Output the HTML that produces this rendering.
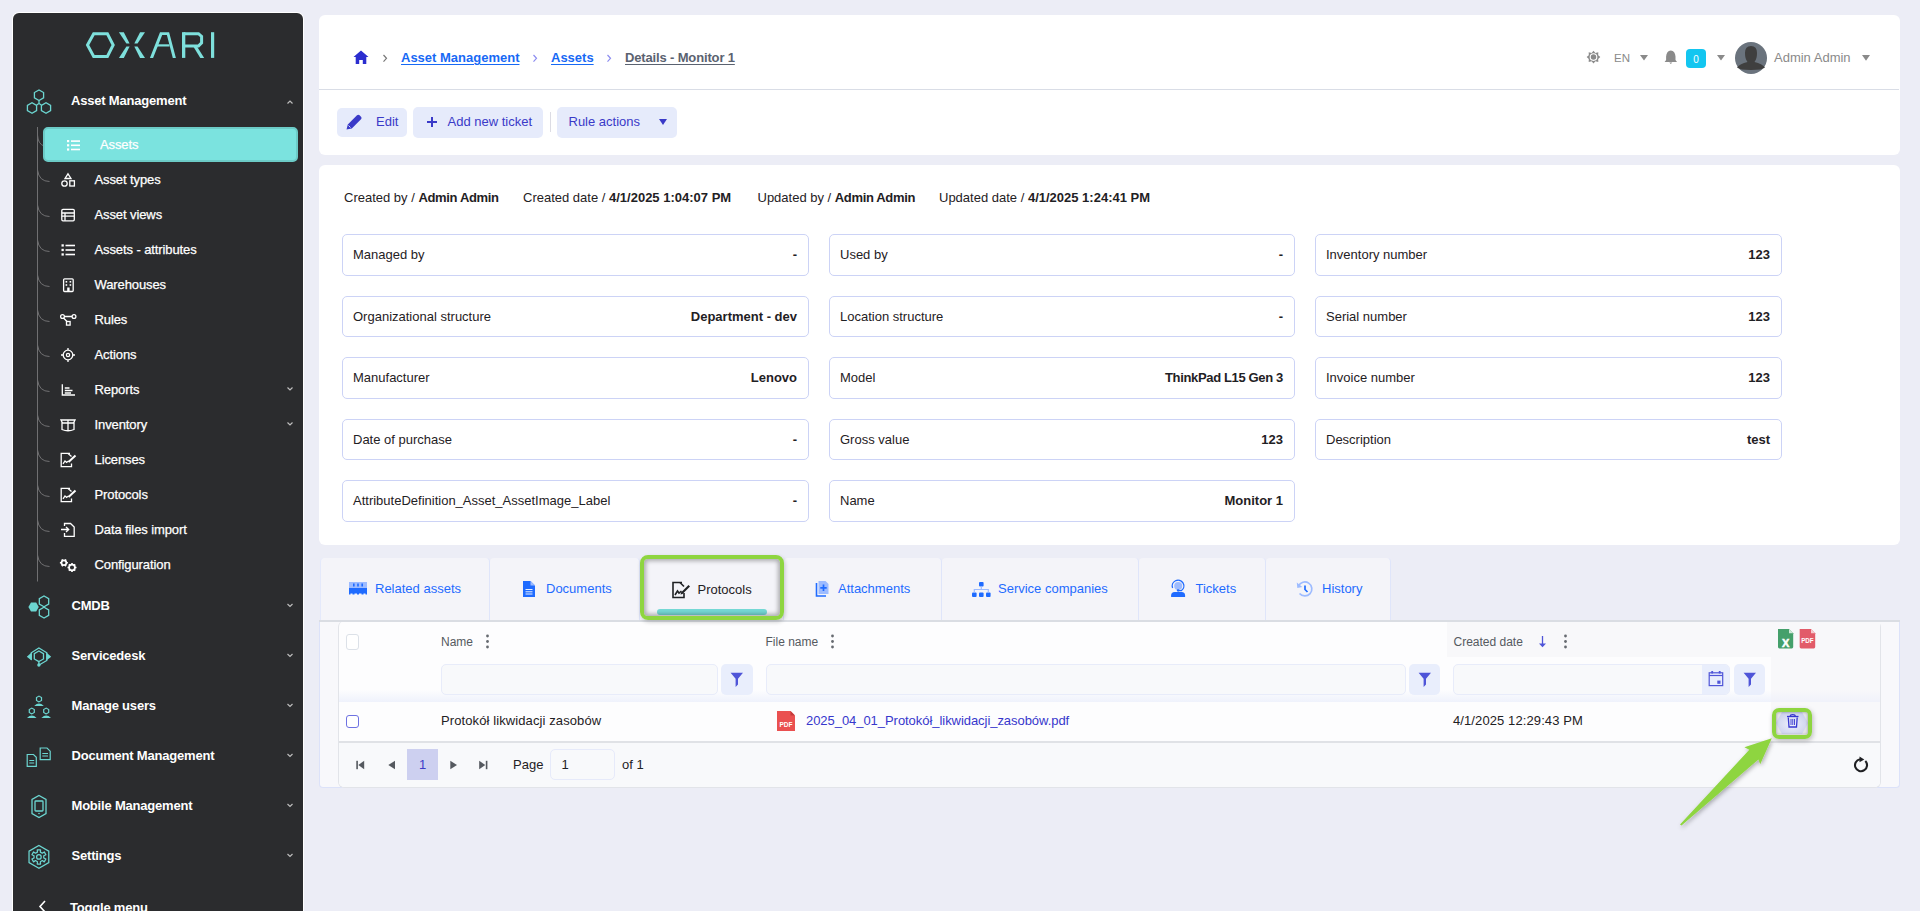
<!DOCTYPE html>
<html><head><meta charset="utf-8">
<style>
*{box-sizing:border-box;margin:0;padding:0}
html,body{width:1920px;height:911px;overflow:hidden}
body{background:#ECEDF6;font-family:"Liberation Sans",sans-serif;font-size:13px;color:#1F2124;position:relative}
.abs{position:absolute}
svg{display:block;overflow:visible}
/* sidebar */
#sb{position:absolute;left:13px;top:13px;width:290px;height:920px;background:#2B2C2E;border-radius:6px;box-shadow:0 0 0 1px #fff}
.sbt{position:absolute;color:#fff;font-size:13px;white-space:nowrap;line-height:16px;margin-top:1px}
.sbm{font-weight:bold;letter-spacing:-0.2px}
.sbs{letter-spacing:-0.1px;-webkit-text-stroke:0.25px #fff}
.chev{position:absolute;left:286px;width:6px;height:6px}
/* cards */
.card{position:absolute;background:#fff;border-radius:6px}
.lnk{color:#1769F5;font-weight:bold;text-decoration:underline;text-underline-offset:2px;text-decoration-thickness:1px}
.btn{position:absolute;background:#E6EBFB;border-radius:5px;color:#3A3AC8;font-size:13px;line-height:16px}
.gry{color:#8A8A8A}
.fld{position:absolute;height:42px;border:1px solid #CCD3F6;border-radius:5px;width:467px}
.fld .l{position:absolute;left:10px;top:12px;line-height:16px;white-space:nowrap}
.fld .v{position:absolute;right:11px;top:12px;line-height:16px;font-weight:bold;white-space:nowrap}
.tab{position:absolute;top:558px;height:63px;background:#F4F4F9;border-right:1px solid #DFE5FA;color:#1F6BFF;font-size:13px}
.tab .t{position:absolute;top:23px;line-height:16px;white-space:nowrap}
.tab svg{position:absolute}
</style></head><body>

<!-- SIDEBAR -->
<div id="sb"></div>
<svg class="abs" style="left:0;top:0" width="320" height="911">
  <!-- logo -->
  <g fill="none" stroke="#7EE0DC" stroke-width="3" stroke-linejoin="miter">
    <polygon points="87.5,45 93.7,33.7 107.4,33.7 113.2,45 107.4,56.4 93.7,56.4"/>
  </g>
  <g fill="#7EE0DC">
    <polygon points="118.9,32.2 123.8,32.2 129.6,43.6 126.4,43.6"/>
    <polygon points="118.9,57.9 123.8,57.9 129.6,46.4 126.4,46.4"/>
    <polygon points="145,32.2 140.1,32.2 134.3,43.6 137.5,43.6"/>
    <polygon points="145,57.9 140.1,57.9 134.3,46.4 137.5,46.4"/>
    <polygon points="149.9,57.9 160,32.2 169.1,32.2 175.9,57.9 172.8,57.9 166.9,35 162.2,35 153.1,57.9"/>
    <rect x="156.5" y="44.3" width="13" height="2.2"/>
    <rect x="182" y="32.2" width="3.3" height="25.7"/>
    <rect x="211" y="32.2" width="3.2" height="25.7"/>
    <polygon points="193.3,46.5 197,46.5 204.2,57.9 200.3,57.9"/>
  </g>
  <path d="M183.6,33.7 H198.5 L201.6,36.5 V42.8 L198.5,46 H183.6" fill="none" stroke="#7EE0DC" stroke-width="3"/>
</svg>
<svg class="abs" style="left:0;top:0" width="320" height="911"><g fill="none" stroke="#707072" stroke-width="1"><path d="M37.5,127 V581.5"/><path d="M37.5,135 Q38,144 44,146"/><path d="M37.5,170 Q39,181.5 49.5,181.5"/><path d="M37.5,205 Q39,216.5 49.5,216.5"/><path d="M37.5,240 Q39,251.5 49.5,251.5"/><path d="M37.5,275 Q39,286.5 49.5,286.5"/><path d="M37.5,310 Q39,321.5 49.5,321.5"/><path d="M37.5,345 Q39,356.5 49.5,356.5"/><path d="M37.5,380 Q39,391.5 49.5,391.5"/><path d="M37.5,415 Q39,426.5 49.5,426.5"/><path d="M37.5,450 Q39,461.5 49.5,461.5"/><path d="M37.5,485 Q39,496.5 49.5,496.5"/><path d="M37.5,520 Q39,531.5 49.5,531.5"/><path d="M37.5,555 Q39,566.5 49.5,566.5"/></g></svg>
<div class="sbt sbm" style="left:71px;top:92px">Asset Management</div>
<div class="abs" style="left:43px;top:127px;width:255px;height:35px;background:#7BE3DF;border:2px solid #6CCBC7;border-radius:5px"></div>
<div class="sbt sbs" style="left:100px;top:136px">Assets</div>
<div class="sbt sbs" style="left:94.5px;top:171px">Asset types</div>
<div class="sbt sbs" style="left:94.5px;top:206px">Asset views</div>
<div class="sbt sbs" style="left:94.5px;top:241px">Assets - attributes</div>
<div class="sbt sbs" style="left:94.5px;top:276px">Warehouses</div>
<div class="sbt sbs" style="left:94.5px;top:311px">Rules</div>
<div class="sbt sbs" style="left:94.5px;top:346px">Actions</div>
<div class="sbt sbs" style="left:94.5px;top:381px">Reports</div>
<div class="sbt sbs" style="left:94.5px;top:416px">Inventory</div>
<div class="sbt sbs" style="left:94.5px;top:451px">Licenses</div>
<div class="sbt sbs" style="left:94.5px;top:486px">Protocols</div>
<div class="sbt sbs" style="left:94.5px;top:521px">Data files import</div>
<div class="sbt sbs" style="left:94.5px;top:556px">Configuration</div>
<div class="sbt sbm" style="left:71.5px;top:597px">CMDB</div>
<div class="sbt sbm" style="left:71.5px;top:647px">Servicedesk</div>
<div class="sbt sbm" style="left:71.5px;top:697px">Manage users</div>
<div class="sbt sbm" style="left:71.5px;top:747px">Document Management</div>
<div class="sbt sbm" style="left:71.5px;top:797px">Mobile Management</div>
<div class="sbt sbm" style="left:71.5px;top:847px">Settings</div>
<div class="sbt sbm" style="left:70px;top:899px">Toggle menu</div>
<svg class="abs" style="left:0;top:0" width="320" height="911"><g fill="none" stroke="#BDBDBD" stroke-width="1.2"><path d="M287.5,103.5 L290,101 L292.5,103.5"/><path d="M287.5,387.5 L290,390 L292.5,387.5"/><path d="M287.5,422.5 L290,425 L292.5,422.5"/><path d="M287.5,604 L290,606.5 L292.5,604"/><path d="M287.5,654 L290,656.5 L292.5,654"/><path d="M287.5,704 L290,706.5 L292.5,704"/><path d="M287.5,754 L290,756.5 L292.5,754"/><path d="M287.5,804 L290,806.5 L292.5,804"/><path d="M287.5,854 L290,856.5 L292.5,854"/><path d="M45,901 L40,906.5 L45,912" stroke="#fff" stroke-width="1.6"/></g></svg>
<svg class="abs" style="left:0;top:0" width="320" height="911">
<g fill="none" stroke="#6CD6D1" stroke-width="1.3"><polygon points="39.00,100.50 34.41,97.85 34.41,92.55 39.00,89.90 43.59,92.55 43.59,97.85"/><polygon points="32.00,113.30 27.41,110.65 27.41,105.35 32.00,102.70 36.59,105.35 36.59,110.65"/><polygon points="46.00,113.30 41.41,110.65 41.41,105.35 46.00,102.70 50.59,105.35 50.59,110.65"/><path d="M39,100.5 V103.5 M39,103.5 L36.6,105 M39,103.5 L41.4,105"/></g>
<g fill="none" stroke="#6CD6D1" stroke-width="1.3"><polygon points="44.00,606.70 39.32,604.00 39.32,598.60 44.00,595.90 48.68,598.60 48.68,604.00"/><polygon points="44.00,618.00 39.32,615.30 39.32,609.90 44.00,607.20 48.68,609.90 48.68,615.30"/></g><polygon fill="#6CD6D1" points="38.80,607.00 36.20,611.50 31.00,611.50 28.40,607.00 31.00,602.50 36.20,602.50"/>
<g fill="none" stroke="#6CD6D1" stroke-width="1.3"><polygon points="38.90,661.60 34.31,658.95 34.31,653.65 38.90,651.00 43.49,653.65 43.49,658.95"/><path d="M31.3,660 V652.8 L38.9,648 L46.8,652.8 V660.5 L39.5,664.8"/><path d="M38.9,661.6 V664"/></g><path fill="#6CD6D1" d="M26.8,656.7 L31.6,652.6 V660.6 Z M51.2,656.7 L46.4,652.6 V660.6 Z"/><circle cx="38.9" cy="665" r="1.7" fill="#6CD6D1"/>
<polygon points="39.00,701.90 36.49,700.45 36.49,697.55 39.00,696.10 41.51,697.55 41.51,700.45" fill="none" stroke="#6CD6D1" stroke-width="1.2"/><path d="M34.2,706 Q39,701.2 43.8,706 Z" fill="#6CD6D1"/><polygon points="31.80,713.90 29.29,712.45 29.29,709.55 31.80,708.10 34.31,709.55 34.31,712.45" fill="none" stroke="#6CD6D1" stroke-width="1.2"/><path d="M27.0,718 Q31.8,713.2 36.6,718 Z" fill="#6CD6D1"/><polygon points="46.20,713.90 43.69,712.45 43.69,709.55 46.20,708.10 48.71,709.55 48.71,712.45" fill="none" stroke="#6CD6D1" stroke-width="1.2"/><path d="M41.400000000000006,718 Q46.2,713.2 51.0,718 Z" fill="#6CD6D1"/>
<g fill="none" stroke="#6CD6D1" stroke-width="1.2"><path d="M27.2,754.5 H33.5 L36.3,757.3 V766.3 H27.2 Z"/><path d="M29.3,760.5 H34.2 M29.3,763 H34.2"/><path d="M40.2,748 H47 L50.2,751.2 V759.6 H40.2 Z"/><path d="M42.3,753.5 H48 M42.3,756 H48"/></g>
<g fill="none" stroke="#6CD6D1" stroke-width="1.3"><polygon points="39,795.5 46,799.5 46,813.5 39,817.5 32,813.5 32,799.5"/><rect x="35" y="801" width="8" height="10" rx="0.8"/></g><circle cx="39" cy="813.5" r="0.8" fill="#6CD6D1"/>
<g fill="none" stroke="#6CD6D1" stroke-width="1.25"><polygon points="38.90,868.30 29.03,862.60 29.03,851.20 38.90,845.50 48.77,851.20 48.77,862.60"/><path d="M37.44,852.12 L37.26,849.79 L40.54,849.79 L40.36,852.12 L42.31,853.24 L44.24,851.92 L45.88,854.77 L43.77,855.78 L43.77,858.02 L45.88,859.03 L44.24,861.88 L42.31,860.56 L40.36,861.68 L40.54,864.01 L37.26,864.01 L37.44,861.68 L35.49,860.56 L33.56,861.88 L31.92,859.03 L34.03,858.02 L34.03,855.78 L31.92,854.77 L33.56,851.92 L35.49,853.24Z" stroke-linejoin="round"/><circle cx="38.9" cy="856.9" r="2.3"/></g>
<g fill="#fff"><rect x="67" y="140" width="2.2" height="2.2"/><rect x="67" y="144.2" width="2.2" height="2.2"/><rect x="67" y="148.4" width="2.2" height="2.2"/><rect x="71" y="140.3" width="9" height="1.6"/><rect x="71" y="144.5" width="9" height="1.6"/><rect x="71" y="148.7" width="9" height="1.6"/></g>
<g fill="none" stroke="#fff" stroke-width="1.3"><path d="M68,173.8 L71,178.5 H65 Z"/><circle cx="64.5" cy="183.5" r="2.7"/><rect x="69.8" y="180.8" width="4.6" height="5.2"/></g>
<g fill="none" stroke="#fff" stroke-width="1.3"><rect x="61.8" y="209.3" width="12.5" height="11.5" rx="1.2"/><path d="M61.8,213 H74.3 M61.8,216.2 H74.3 M65,213 V220.8"/></g>
<g fill="#fff"><rect x="61.5" y="244.3" width="2.3" height="2.3"/><rect x="61.5" y="248.8" width="2.3" height="2.3"/><rect x="61.5" y="253.3" width="2.3" height="2.3"/><rect x="65.5" y="244.7" width="9.5" height="1.6"/><rect x="65.5" y="249.2" width="9.5" height="1.6"/><rect x="65.5" y="253.7" width="9.5" height="1.6"/></g>
<g fill="none" stroke="#fff" stroke-width="1.3"><rect x="63.6" y="278.8" width="9.6" height="12.7" rx="1"/></g><g fill="#fff"><rect x="65.6" y="281" width="1.6" height="1.6"/><rect x="69.6" y="281" width="1.6" height="1.6"/><rect x="65.6" y="284.2" width="1.6" height="1.6"/><rect x="69.6" y="284.2" width="1.6" height="1.6"/><rect x="67.2" y="287.5" width="2.4" height="4"/></g>
<g fill="none" stroke="#fff" stroke-width="1.3"><circle cx="62.5" cy="316.5" r="1.9"/><circle cx="74" cy="316.5" r="1.9"/><rect x="66.5" y="321.5" width="3.6" height="3.6"/><path d="M64.4,316.5 H72 M63.5,318 L67,321.5"/></g>
<g fill="none" stroke="#fff" stroke-width="1.3"><circle cx="68" cy="355" r="4.8"/><circle cx="68" cy="355" r="1.6"/><path d="M68,348 V350 M68,360 V362 M61,355 H63 M73,355 H75"/></g>
<g fill="none" stroke="#fff" stroke-width="1.3"><path d="M62.3,384.3 V395 H75"/><path d="M64.8,388 H69.5 M64.8,390.5 H72.5 M64.8,393 H71"/></g>
<g fill="none" stroke="#fff" stroke-width="1.3"><path d="M62,422.5 V429.5 Q68,432 74,429.5 V422.5"/><path d="M61,420 H75 L73.5,423 H62.5 Z"/><path d="M68,420 V431"/></g>
<g fill="none" stroke="#fff" stroke-width="1.3"><path d="M70,453.4 H61.2 V466.59999999999997 H71.5 V463.4"/><path d="M68,453.4 L71.5,456.4"/><path d="M63,463.9 L65,460.9 L66.5,462.4 L68.5,460.9"/><path stroke-width="2" d="M68.5,461.9 L75.5,455.4"/></g>
<g fill="none" stroke="#fff" stroke-width="1.3"><path d="M70,488.4 H61.2 V501.59999999999997 H71.5 V498.4"/><path d="M68,488.4 L71.5,491.4"/><path d="M63,498.9 L65,495.9 L66.5,497.4 L68.5,495.9"/><path stroke-width="2" d="M68.5,496.9 L75.5,490.4"/></g>
<g fill="none" stroke="#fff" stroke-width="1.3"><path d="M64.5,526 V523.5 H70.5 L74.2,527 V536.3 H64.5 V533"/><path d="M61,529.5 H68.5 M66,527 L68.7,529.5 L66,532"/></g>
<circle cx="63.9" cy="562.8" r="2.4" fill="none" stroke="#fff" stroke-width="1.7"/><path d="M66.30,562.80 L67.90,562.80 M65.10,564.88 L65.90,566.26 M62.70,564.88 L61.90,566.26 M61.50,562.80 L59.90,562.80 M62.70,560.72 L61.90,559.34 M65.10,560.72 L65.90,559.34" stroke="#fff" stroke-width="1.6"/><circle cx="72" cy="567.5" r="2.9" fill="none" stroke="#fff" stroke-width="1.7"/><path d="M74.90,567.50 L76.50,567.50 M74.05,569.55 L75.18,570.68 M72.00,570.40 L72.00,572.00 M69.95,569.55 L68.82,570.68 M69.10,567.50 L67.50,567.50 M69.95,565.45 L68.82,564.32 M72.00,564.60 L72.00,563.00 M74.05,565.45 L75.18,564.32" stroke="#fff" stroke-width="1.6"/></svg>
<!-- HEADER CARD -->
<div class="card" style="left:319px;top:15px;width:1581px;height:140px"></div>
<div class="abs" style="left:319px;top:89px;width:1580px;height:1px;background:#D9DDE6"></div>
<svg class="abs" style="left:0;top:0" width="1920" height="160">
  <path d="M361,50.5 L368.5,57 H366.3 V64 H362.8 V60 H359.2 V64 H355.7 V57 H353.5 Z" fill="#2B2DCF"/>
  <path d="M383.5,55 L386.5,58.3 L383.5,61.6" fill="none" stroke="#777" stroke-width="1.2"/>
  <path d="M533.5,55 L536.5,58.3 L533.5,61.6" fill="none" stroke="#8C8CF0" stroke-width="1.2"/>
  <path d="M607.5,55 L610.5,58.3 L607.5,61.6" fill="none" stroke="#8C8CF0" stroke-width="1.2"/>
</svg>
<div class="abs lnk" style="left:401px;top:50px;line-height:16px">Asset Management</div>
<div class="abs lnk" style="left:551px;top:50px;line-height:16px">Assets</div>
<div class="abs" style="left:625px;top:50px;line-height:16px;font-weight:bold;color:#5A6270;text-decoration:underline;text-underline-offset:2px;letter-spacing:-0.15px">Details - Monitor 1</div>

<div class="btn" style="left:337px;top:108px;width:70px;height:29px"></div>
<div class="btn" style="left:413px;top:107px;width:130px;height:31px"></div>
<div class="abs" style="left:550px;top:112px;width:1px;height:20px;background:#DCDCE4"></div>
<div class="btn" style="left:557px;top:107px;width:120px;height:31px"></div>
<div class="abs" style="left:376px;top:113.5px;line-height:16px;color:#3A3AC8">Edit</div>
<div class="abs" style="left:447.5px;top:113.5px;line-height:16px;color:#3A3AC8">Add new ticket</div>
<div class="abs" style="left:568.5px;top:113.5px;line-height:16px;color:#3A3AC8">Rule actions</div>
<svg class="abs" style="left:0;top:0" width="1920" height="160">
  <path d="M346.5,129.5 L347.8,124.5 L357,115.3 Q358.3,114 359.6,115.3 L361,116.7 Q362.3,118 361,119.3 L351.8,128.5 Z" fill="#3A3AC8"/>
  <path d="M348.5,125.5 L350.5,127.5" stroke="#E6EBFB" stroke-width="0.9"/>
  <path d="M432,117 V127 M427,122 H437" stroke="#3A3AC8" stroke-width="2"/>
  <path d="M659,119 H667 L663,125 Z" fill="#3A3AC8"/>
</svg>

<!-- header right -->
<svg class="abs" style="left:0;top:0" width="1920" height="160">
  <g fill="#8A8A8A">
    <polygon points="1593.5,50.7 1595.4,53 1598.3,52.2 1598.2,55.2 1600.3,57.1 1598.2,59 1598.3,62 1595.4,61.2 1593.5,63.5 1591.6,61.2 1588.7,62 1588.8,59 1586.7,57.1 1588.8,55.2 1588.7,52.2 1591.6,53"/>
  </g>
  <circle cx="1593.5" cy="57.1" r="3.3" fill="none" stroke="#fff" stroke-width="1.1"/>
  <path d="M1640,55 H1648 L1644,60.5 Z M1717,55 H1725 L1721,60.5 Z M1862,55 H1870 L1866,60.8 Z" fill="#8A8A8A"/>
  <path d="M1670.8,50.4 Q1675.2,51 1675.5,56.5 V60 L1677,62 H1664.6 L1666.1,60 V56.5 Q1666.4,51 1670.8,50.4 Z" fill="#8A8A8A"/>
  <path d="M1669.3,62.5 H1672.3 L1670.8,64 Z" fill="#8A8A8A"/>
  <circle cx="1751" cy="58" r="16" fill="#6A737D"/>
  <path d="M1751,46 Q1757,46 1757,53 Q1757,59 1754.5,62 Q1762,63.5 1765,67.5 Q1762,70 1751,70 Q1740,70 1737,67.5 Q1740,63.5 1747.5,62 Q1745,59 1745,53 Q1745,46 1751,46 Z" fill="#3F3F3F"/>
</svg>
<div class="abs gry" style="left:1614px;top:50px;line-height:16px;font-size:11.5px;letter-spacing:0px">EN</div>
<div class="abs" style="left:1686px;top:49px;width:20px;height:19px;background:#13C6F0;border-radius:4px;color:#fff;font-size:10px;line-height:21px;text-align:center">0</div>
<div class="abs gry" style="left:1774px;top:49.5px;line-height:16px">Admin Admin</div>

<!-- INFO CARD -->
<div class="card" style="left:319px;top:165px;width:1581px;height:380px"></div>
<div class="abs" style="left:344px;top:189.5px;line-height:16px;white-space:nowrap">Created by / <b style="letter-spacing:-0.35px">Admin Admin</b></div>
<div class="abs" style="left:523px;top:189.5px;line-height:16px;white-space:nowrap">Created date / <b>4/1/2025 1:04:07 PM</b></div>
<div class="abs" style="left:757.5px;top:189.5px;line-height:16px;white-space:nowrap">Updated by / <b style="letter-spacing:-0.35px">Admin Admin</b></div>
<div class="abs" style="left:939px;top:189.5px;line-height:16px;white-space:nowrap">Updated date / <b>4/1/2025 1:24:41 PM</b></div>

<div class="fld" style="left:342px;top:234px;height:42px;width:467px"><span class="l">Managed by</span><span class="v">-</span></div>
<div class="fld" style="left:829px;top:234px;height:42px;width:466px"><span class="l">Used by</span><span class="v">-</span></div>
<div class="fld" style="left:1315px;top:234px;height:42px;width:467px"><span class="l">Inventory number</span><span class="v">123</span></div>
<div class="fld" style="left:342px;top:296px;height:41px;width:467px"><span class="l">Organizational structure</span><span class="v">Department - dev</span></div>
<div class="fld" style="left:829px;top:296px;height:41px;width:466px"><span class="l">Location structure</span><span class="v">-</span></div>
<div class="fld" style="left:1315px;top:296px;height:41px;width:467px"><span class="l">Serial number</span><span class="v">123</span></div>
<div class="fld" style="left:342px;top:357px;height:42px;width:467px"><span class="l">Manufacturer</span><span class="v">Lenovo</span></div>
<div class="fld" style="left:829px;top:357px;height:42px;width:466px"><span class="l">Model</span><span class="v" style="letter-spacing:-0.35px">ThinkPad L15 Gen 3</span></div>
<div class="fld" style="left:1315px;top:357px;height:42px;width:467px"><span class="l">Invoice number</span><span class="v">123</span></div>
<div class="fld" style="left:342px;top:419px;height:41px;width:467px"><span class="l">Date of purchase</span><span class="v">-</span></div>
<div class="fld" style="left:829px;top:419px;height:41px;width:466px"><span class="l">Gross value</span><span class="v">123</span></div>
<div class="fld" style="left:1315px;top:419px;height:41px;width:467px"><span class="l">Description</span><span class="v">test</span></div>
<div class="fld" style="left:342px;top:480px;height:42px;width:467px"><span class="l">AttributeDefinition_Asset_AssetImage_Label</span><span class="v">-</span></div>
<div class="fld" style="left:829px;top:480px;height:42px;width:466px"><span class="l">Name</span><span class="v">Monitor 1</span></div>
<!-- TABS -->
<div class="abs" style="left:319px;top:620px;width:1581px;height:168px;background:#F8F8FB;border:1px solid #DCE2F9;border-top:none;border-radius:0 0 4px 4px"></div>

<div class="abs" style="left:320px;top:558px;width:170px;height:63px;background:#F4F4F9;border-radius:4px 4px 0 0;border-right:1px solid #DFE5FA;border-left:1px solid #E4E9FB;"></div>
<div class="abs" style="left:490px;top:558px;width:150px;height:63px;background:#F4F4F9;border-radius:4px 4px 0 0;border-right:1px solid #DFE5FA;"></div>
<div class="abs" style="left:640px;top:558px;width:144px;height:63px;background:#F4F4F9;border-radius:4px 4px 0 0;border-right:1px solid #DFE5FA;"></div>
<div class="abs" style="left:784px;top:558px;width:158px;height:63px;background:#F4F4F9;border-radius:4px 4px 0 0;border-right:1px solid #DFE5FA;"></div>
<div class="abs" style="left:942px;top:558px;width:197px;height:63px;background:#F4F4F9;border-radius:4px 4px 0 0;border-right:1px solid #DFE5FA;"></div>
<div class="abs" style="left:1139px;top:558px;width:127px;height:63px;background:#F4F4F9;border-radius:4px 4px 0 0;border-right:1px solid #DFE5FA;"></div>
<div class="abs" style="left:1266px;top:558px;width:125px;height:63px;background:#F4F4F9;border-radius:4px 4px 0 0;border-right:1px solid #DFE5FA;"></div>
<div class="abs" style="left:319px;top:620px;width:1581px;height:2px;background:#DADDE3"></div>
<div class="abs" style="left:375px;top:581px;line-height:16px;color:#1F6BFF">Related assets</div>
<div class="abs" style="left:546px;top:581px;line-height:16px;color:#1F6BFF">Documents</div>
<div class="abs" style="left:697.5px;top:582px;line-height:16px;color:#1F2124">Protocols</div>
<div class="abs" style="left:838px;top:581px;line-height:16px;color:#1F6BFF">Attachments</div>
<div class="abs" style="left:998px;top:581px;line-height:16px;color:#1F6BFF">Service companies</div>
<div class="abs" style="left:1195.5px;top:581px;line-height:16px;color:#1F6BFF">Tickets</div>
<div class="abs" style="left:1322px;top:581px;line-height:16px;color:#1F6BFF">History</div>
<div class="abs" style="left:657px;top:609px;width:110px;height:6px;background:#76D9D6;border-radius:3px"></div>
<svg class="abs" style="left:0;top:0" width="1920" height="911">
  <!-- related assets (ram) -->
  <g fill="#1F6BFF">
    <path d="M349,582 H367 V588 H349 Z" fill="#9DBBFF"/>
    <rect x="349" y="588" width="18" height="5"/>
    <rect x="353" y="583.5" width="1.6" height="3" fill="#1F6BFF"/><rect x="357.2" y="583.5" width="1.6" height="3" fill="#1F6BFF"/><rect x="361.4" y="583.5" width="1.6" height="3" fill="#1F6BFF"/>
    <path d="M349,593 H367 V594.5 H365.5 V593.6 H363.5 V594.5 H361.5 V593.6 H359 V594.5 H357 V593.6 H354.5 V594.5 H352.5 V593.6 H350.5 V594.5 H349 Z"/>
  </g>
  <!-- documents -->
  <path d="M523,581 H530.5 L535,585.5 V597 H523 Z" fill="#1F6BFF"/>
  <path d="M530.5,581 V585.5 H535" fill="#9DBBFF"/>
  <path d="M525.5,589.5 H532.5 M525.5,591.8 H532.5 M525.5,594 H532.5" stroke="#fff" stroke-width="0.9"/>
  <!-- protocols (active, black) -->
  <g fill="none" stroke="#1F2124" stroke-width="1.6">
    <path d="M682,582.5 H673 V597.5 H684 V593"/>
    <path d="M680,582.5 L684,586.5"/>
    <path d="M675,595 L677.5,591 L679,593 L681.5,591"/>
  </g>
  <path d="M681,592.5 L688.5,585 L690,586.5 L682.5,594 L680.5,594.5 Z" fill="#1F2124"/>
  <!-- attachments -->
  <path d="M816.5,583 V596 H826" fill="none" stroke="#1F6BFF" stroke-width="1.6"/>
  <path d="M818.5,581 H825.5 L828.5,584 V594 H818.5 Z" fill="#9DBBFF"/>
  <path d="M823.5,584.5 V591 M820.3,587.8 H826.7" stroke="#1F6BFF" stroke-width="1.7"/>
  <!-- service companies -->
  <g fill="#1F6BFF">
    <rect x="979" y="582" width="4.6" height="4.6" rx="1"/>
    <rect x="972" y="592.5" width="4.6" height="4.6" rx="1"/><rect x="979" y="592.5" width="4.6" height="4.6" rx="1"/><rect x="986" y="592.5" width="4.6" height="4.6" rx="1"/>
  </g>
  <path d="M981.3,586.6 V589.5 M974.3,592.5 V589.5 H988.3 V592.5" fill="none" stroke="#9DBBFF" stroke-width="1.2"/>
  <!-- tickets -->
  <circle cx="1178.2" cy="586" r="4" fill="#9DBBFF"/>
  <path d="M1172.6,588 A5.8,5.8 0 1 1 1181.5,590.6 Q1180.5,590.6 1177.8,590.6" fill="none" stroke="#1F6BFF" stroke-width="1.3"/>
  <rect x="1176.8" y="589.3" width="2.6" height="2.2" rx="1" fill="#1F6BFF"/>
  <path d="M1171.1,597 V595.5 Q1171.1,592 1174.6,592 H1181.6 Q1185.1,592 1185.1,595.5 V597 Z" fill="#1F6BFF"/>
  <!-- history -->
  <path d="M1298.5,586 A7,7 0 1 1 1299.5,593.5" fill="none" stroke="#9DBBFF" stroke-width="1.7"/>
  <path d="M1296.8,582.5 L1297.3,588 L1302.3,587" fill="#9DBBFF"/>
  <path d="M1305,585.5 V589.5 L1307.5,592" fill="none" stroke="#1F6BFF" stroke-width="1.7"/>
</svg>

<!-- TABLE -->
<div class="abs" style="left:338px;top:621px;width:1543px;height:167px;background:#FDFDFE;border:1px solid #E2E4E9;border-top:none;border-radius:6px"></div>
<div class="abs" style="left:319px;top:620px;width:1581px;height:2px;background:#DADDE3"></div>
<div class="abs" style="left:1447px;top:622px;width:433px;height:35px;background:#F8F8FA"></div>
<div class="abs" style="left:1771px;top:657px;width:109px;height:85px;background:#F8F8FA"></div>
<div class="abs" style="left:339px;top:690px;width:1432px;height:12px;background:linear-gradient(#FDFDFE,#EFF2FC)"></div>
<div class="abs" style="left:1771px;top:690px;width:109px;height:12px;background:linear-gradient(#F8F8FA,#F0F2FA)"></div>
<div class="abs" style="left:339px;top:741px;width:1541px;height:2px;background:#E0E2E6"></div>
<div class="abs" style="left:339px;top:743px;width:1541px;height:44px;background:#F8F9FB;border-radius:0 0 5px 5px"></div>
<div class="abs" style="left:346px;top:634px;width:13px;height:16px;border:1px solid #DCE1E8;border-radius:3px;background:#fff"></div>
<div class="abs" style="left:441px;top:634px;line-height:16px;font-size:12px;color:#555A60">Name</div>
<div class="abs" style="left:765.5px;top:634px;line-height:16px;font-size:12px;color:#555A60">File name</div>
<div class="abs" style="left:1453.5px;top:634px;line-height:16px;font-size:12px;color:#555A60">Created date</div>
<div class="abs" style="left:441px;top:664px;width:277px;height:31px;background:#F8F9FB;border:1px solid #E8ECFA;border-radius:5px"></div>
<div class="abs" style="left:721px;top:664px;width:32px;height:31px;background:#E9EEFC;border-radius:5px"></div>
<div class="abs" style="left:766px;top:664px;width:640px;height:31px;background:#F8F9FB;border:1px solid #E8ECFA;border-radius:5px"></div>
<div class="abs" style="left:1409px;top:664px;width:31px;height:31px;background:#E9EEFC;border-radius:5px"></div>
<div class="abs" style="left:1453px;top:664px;width:277px;height:31px;background:#F8F9FB;border:1px solid #E8ECFA;border-radius:5px;overflow:hidden"><div style="position:absolute;right:0;top:0;width:27px;height:31px;background:#E9EEFC"></div></div>
<div class="abs" style="left:1734px;top:664px;width:31px;height:31px;background:#E9EEFC;border-radius:5px"></div>
<svg class="abs" style="left:0;top:0" width="1920" height="911">
  <g fill="#666A70"><circle cx="487.5" cy="636" r="1.4"/><circle cx="487.5" cy="641.5" r="1.4"/><circle cx="487.5" cy="647" r="1.4"/>
  <circle cx="832.5" cy="636" r="1.4"/><circle cx="832.5" cy="641.5" r="1.4"/><circle cx="832.5" cy="647" r="1.4"/>
  <circle cx="1565.5" cy="636" r="1.4"/><circle cx="1565.5" cy="641.5" r="1.4"/><circle cx="1565.5" cy="647" r="1.4"/></g>
  <path d="M1542.5,636 V645.5" stroke="#4F55D8" stroke-width="1.3"/><path d="M1539,643.5 H1546 L1542.5,647.3 Z" fill="#4F55D8"/>
  <g fill="#4F55D8">
    <path d="M730.6,672.8 H743.0 L738.0,678.8 V684.6 L735.6,687 V678.8 Z"/>
    <path d="M1418.6,672.8 H1431.0 L1426.0,678.8 V684.6 L1423.6,687 V678.8 Z"/>
    <path d="M1743.6,672.8 H1756.0 L1751.0,678.8 V684.6 L1748.6,687 V678.8 Z"/>
  </g>
  <g fill="none" stroke="#4F55D8" stroke-width="1.2"><rect x="1709.2" y="672.8" width="13.5" height="12.8"/><path d="M1709.2,675.5 H1722.7"/></g>
  <g fill="#4F55D8"><rect x="1711.3" y="671" width="1.8" height="2.5"/><rect x="1718.8" y="671" width="1.8" height="2.5"/><rect x="1717.3" y="680.6" width="3.2" height="3.2"/></g>
  <!-- excel -->
  <path d="M1778,629 H1789 L1793.2,633.2 V647 Q1793.2,648.4 1791.8,648.4 H1779.4 Q1778,648.4 1778,647 Z" fill="#45A06B"/>
  <path d="M1789,629 V633.2 H1793.2 Z" fill="#CFE8D8"/>
  <text x="1785.6" y="646.5" font-family="Liberation Sans" font-size="11" font-weight="bold" fill="#fff" stroke="#fff" stroke-width="0.5" text-anchor="middle">X</text>
  <!-- pdf -->
  <path d="M1799.7,629 H1811 L1815.2,633.2 V647 Q1815.2,648.4 1813.8,648.4 H1801.1 Q1799.7,648.4 1799.7,647 Z" fill="#E25B69"/>
  <path d="M1811,629 V633.2 H1815.2 Z" fill="#F6C9CE"/>
  <text x="1807.4" y="642.8" font-family="Liberation Sans" font-size="6.5" font-weight="bold" fill="#fff" text-anchor="middle" textLength="12.5" lengthAdjust="spacingAndGlyphs">PDF</text>
</svg>
<!-- data row -->
<div class="abs" style="left:346px;top:715px;width:13px;height:13px;border:1.3px solid #6E72E2;border-radius:3px;background:#fff"></div>
<div class="abs" style="left:441px;top:713px;line-height:16px;color:#1F2124;letter-spacing:0.1px">Protokół likwidacji zasobów</div>
<div class="abs" style="left:806px;top:712.5px;line-height:16px;color:#3737CC;letter-spacing:-0.05px">2025_04_01_Protokół_likwidacji_zasobów.pdf</div>
<div class="abs" style="left:1453px;top:712.5px;line-height:16px;color:#1F2124;letter-spacing:0.1px">4/1/2025 12:29:43 PM</div>
<svg class="abs" style="left:0;top:0" width="1920" height="911">
  <path d="M777,711 H790.5 L795,715.5 V731 H777 Z" fill="#EA5050"/>
  <path d="M790.5,711 L795,715.5 H790.5 Z" fill="#C43A3A"/>
  <text x="786" y="726.5" font-family="Liberation Sans" font-size="6.5" font-weight="bold" fill="#fff" text-anchor="middle">PDF</text>
</svg>
<!-- pager -->
<div class="abs" style="left:407px;top:749px;width:31px;height:31px;background:#CDD0F0"></div>
<div class="abs" style="left:407px;top:757px;width:31px;line-height:16px;text-align:center;color:#3D3DC8">1</div>
<div class="abs" style="left:513px;top:756.5px;line-height:16px;color:#1F2124">Page</div>
<div class="abs" style="left:550px;top:749px;width:65px;height:31px;background:#F8F9FB;border:1px solid #E6EAFA;border-radius:5px"></div>
<div class="abs" style="left:561.5px;top:756.5px;line-height:16px;color:#1F2124">1</div>
<div class="abs" style="left:622px;top:756.5px;line-height:16px;color:#1F2124">of 1</div>
<svg class="abs" style="left:0;top:0" width="1920" height="911">
  <g fill="#55595F">
    <rect x="356.3" y="760.8" width="1.6" height="8.4"/><path d="M364.2,760.8 V769.2 L358.3,765 Z"/>
    <path d="M395,760.8 V769.2 L388.3,765 Z"/>
    <path d="M450.3,760.8 V769.2 L457,765 Z"/>
    <path d="M479.2,760.8 V769.2 L485.3,765 Z"/><rect x="485.8" y="760.8" width="1.6" height="8.4"/>
  </g>
  <path d="M1865.3,761 A6,6 0 1 1 1860,759.3" fill="none" stroke="#1F2023" stroke-width="2.1"/>
  <path d="M1859.5,756.5 L1864.3,759.5 L1859.5,762.3 Z" fill="#1F2023"/>
</svg>

<!-- ANNOTATIONS -->
<div class="abs" style="left:1776px;top:712px;width:32px;height:22px;background:#E4E4E8"></div>
<svg class="abs" style="left:0;top:0" width="1920" height="911">
  <defs>
    <radialGradient id="hg" cx="50%" cy="55%" r="60%"><stop offset="0" stop-color="#EEF0FC"/><stop offset="1" stop-color="#C9CEEC"/></radialGradient>
    <filter id="sh" x="-20%" y="-20%" width="140%" height="140%"><feDropShadow dx="1" dy="2" stdDeviation="2" flood-color="#000" flood-opacity="0.3"/></filter>
  </defs>
  <polygon points="1782,712 1802,712 1808,723 1802,734 1782,734 1776,723" fill="url(#hg)"/>
  <g fill="none" stroke="#3737D0" stroke-width="1.3">
    <path d="M1788.3,717.5 L1789,727 H1796.5 L1797.2,717.5"/>
    <path d="M1787,716.5 H1798.5"/>
    <path d="M1790.3,716 Q1790.3,714.6 1792.7,714.6 Q1795.2,714.6 1795.2,716"/>
    <path d="M1791,719 V725 M1792.75,719 V725 M1794.5,719 V725" stroke-width="0.9"/>
  </g>
  <polygon filter="url(#sh)" fill="#8ED540" points="1680,824.5 1749.3,749.8 1744.4,747.3 1771.8,738.2 1760.2,764.3 1758.4,759.4 1681.5,825.5"/>
</svg>
<div class="abs" style="left:640px;top:555px;width:144px;height:65px;border:4px solid #8ED540;border-radius:8px;box-shadow:inset 0 0 4px 2px rgba(0,0,0,.3), 1px 2px 4px rgba(0,0,0,.2)"></div>
<div class="abs" style="left:1772px;top:708px;width:40px;height:30.5px;border:4px solid #8ED540;border-radius:7px;box-shadow:inset 0 0 2px 1px rgba(0,0,0,.18), 1px 2px 5px rgba(0,0,0,.25)"></div>

</body></html>
